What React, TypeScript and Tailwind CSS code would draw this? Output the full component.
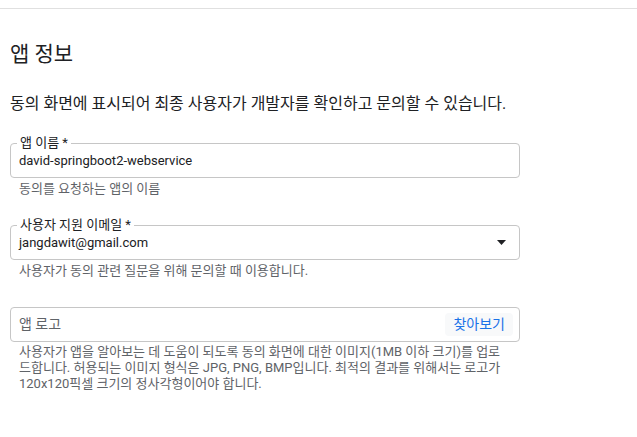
import { ReactNode } from 'react';

const font = { fontFamily: 'Roboto, "Noto Sans CJK KR", sans-serif' };

function Field({ label, children }: { label?: string; children: ReactNode }) {
  return (
    <div className="relative flex h-[35px] w-[510px] items-center rounded-[4px] border border-[#c6c6c6] pl-[8px] pr-[6px]">
      {label && (
        <span className="absolute -top-[10px] left-[6px] bg-white px-[3px] text-[13px] leading-[18px] text-[#202124]">
          {label}
        </span>
      )}
      {children}
    </div>
  );
}

function Helper({ children }: { children: ReactNode }) {
  return <p className="mt-[3px] px-[9px] text-[13px] leading-[16px] text-[#5f6368]">{children}</p>;
}

export default function App() {
  return (
    <div className="h-[437px] w-[637px] overflow-hidden bg-white" style={font}>
      <div className="mt-[8px] border-t border-[#e0e0e0]" />
      <div className="px-[10px]">
        <h1 className="mt-[31px] text-[21px] leading-[28px] font-normal text-[#202124]">앱 정보</h1>
        <p className="mt-[24px] text-[16px] leading-[24px] text-[#202124]">
          동의 화면에 표시되어 최종 사용자가 개발자를 확인하고 문의할 수 있습니다.
        </p>

        <div className="mt-[27px]">
          <Field label="앱 이름 *">
            <span className="text-[13px] text-[#202124]">david-springboot2-webservice</span>
          </Field>
          <Helper>동의를 요청하는 앱의 이름</Helper>
        </div>

        <div className="mt-[28px]">
          <Field label="사용자 지원 이메일 *">
            <span className="flex-1 text-[13px] text-[#202124]">jangdawit@gmail.com</span>
            <svg width="9" height="5" viewBox="0 0 9 5" className="mr-[7px]">
              <path d="M0 0h9L4.5 5z" fill="#202124" />
            </svg>
          </Field>
          <Helper>사용자가 동의 관련 질문을 위해 문의할 때 이용합니다.</Helper>
        </div>

        <div className="mt-[28px]">
          <Field>
            <span className="flex-1 text-[14px] text-[#5f6368]">앱 로고</span>
            <button className="h-[23px] rounded-[4px] bg-[#f8f9fa] px-[8px] text-[14px] text-[#1a73e8]">
              찾아보기
            </button>
          </Field>
          <p className="mt-[2px] w-[502px] px-[9px] text-[13px] leading-[16px] text-[#5f6368]">
            사용자가 앱을 알아보는 데 도움이 되도록 동의 화면에 대한 이미지(1MB 이하 크기)를 업로드합니다. 허용되는 이미지 형식은 JPG, PNG, BMP입니다. 최적의 결과를 위해서는 로고가 120x120픽셀 크기의 정사각형이어야 합니다.
          </p>
        </div>
      </div>
    </div>
  );
}
